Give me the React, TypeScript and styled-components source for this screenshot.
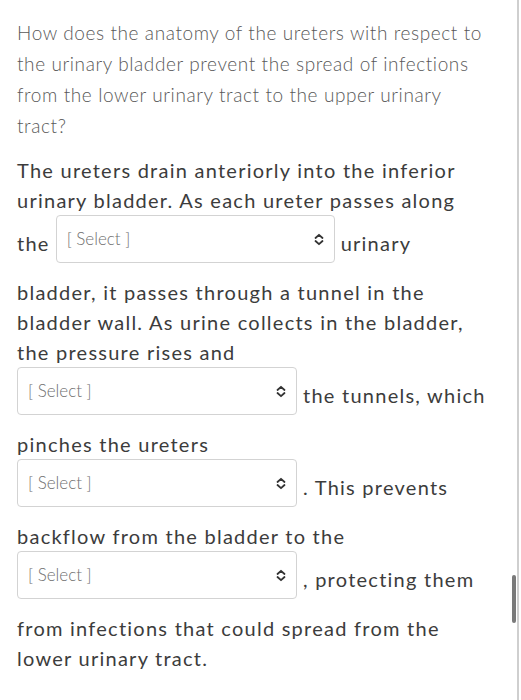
import React from "react";
import styled, { createGlobalStyle } from "styled-components";

const Global = createGlobalStyle`
  html, body { margin: 0; padding: 0; background: #ffffff; }
  body { font-family: Lato, "Open Sans", sans-serif; }
`;

const Page = styled.div`
  position: relative;
  display: flex;
  width: 521px;
  height: 700px;
  overflow: hidden;
  background: #ffffff;
`;

const Content = styled.div`
  flex: 1;
  padding: 17px 0 0 17px;
`;

const EdgeLine = styled.div`
  width: 2px;
  margin-right: 2px;
  background: #cfcfcf;
`;

const Thumb = styled.div`
  position: absolute;
  left: 512px;
  top: 575px;
  width: 4px;
  height: 48px;
  border-radius: 2px;
  background: #7a7a7a;
`;

const Question = styled.p`
  margin: 0;
  font-size: 19px;
  line-height: 31px;
  letter-spacing: 0.6px;
  color: #595959;
  font-weight: 300;
`;

const Answer = styled.p`
  margin: 14px 0 0 0;
  font-size: 20px;
  line-height: 30px;
  color: #3c3c3c;
  letter-spacing: 1.25px;
`;

const SelectBox = styled.span<{ $w: number; $lead?: boolean }>`
  display: inline-flex;
  align-items: center;
  justify-content: space-between;
  box-sizing: border-box;
  width: ${(p) => p.$w}px;
  height: 48px;
  margin: 0 6px 14px ${(p) => (p.$lead ? 0 : 6)}px;
  padding: 0 9px 0 10px;
  vertical-align: middle;
  border: 1px solid #d3d3d3;
  border-radius: 4px;
  background: #ffffff;
  letter-spacing: 0;
`;

const Placeholder = styled.span`
  font-size: 17px;
  font-weight: 300;
  color: #6f6f6f;
`;

const Chevron = () => (
  <svg width="12" height="13" viewBox="0 0 12 13" fill="none">
    <path d="M2.5 5 L6 1.8 L9.5 5" stroke="#333" strokeWidth="1.8" strokeLinecap="round" strokeLinejoin="round" />
    <path d="M2.5 8 L6 11.2 L9.5 8" stroke="#333" strokeWidth="1.8" strokeLinecap="round" strokeLinejoin="round" />
  </svg>
);

const Select = ({ w, lead }: { w: number; lead?: boolean }) => (
  <SelectBox $w={w} $lead={lead}>
    <Placeholder>[ Select ]</Placeholder>
    <Chevron />
  </SelectBox>
);

export default function App() {
  return (
    <>
      <Global />
      <Page>
        <Content>
          <Question>
            How does the anatomy of the ureters with respect to
            <br />
            the urinary bladder prevent the spread of infections
            <br />
            from the lower urinary tract to the upper urinary
            <br />
            tract?
          </Question>
          <Answer>
            The ureters drain anteriorly into the inferior
            <br />
            urinary bladder. As each ureter passes along
            <br />
            the<Select w={279} />urinary
            <br />
            bladder, it passes through a tunnel in the
            <br />
            bladder wall. As urine collects in the bladder,
            <br />
            the pressure rises and
            <br />
            <Select w={280} lead />the tunnels, which
            <br />
            pinches the ureters
            <br />
            <Select w={280} lead />. This prevents
            <br />
            backflow from the bladder to the
            <br />
            <Select w={280} lead />, protecting them
            <br />
            from infections that could spread from the
            <br />
            lower urinary tract.
          </Answer>
        </Content>
        <EdgeLine />
        <Thumb />
      </Page>
    </>
  );
}
